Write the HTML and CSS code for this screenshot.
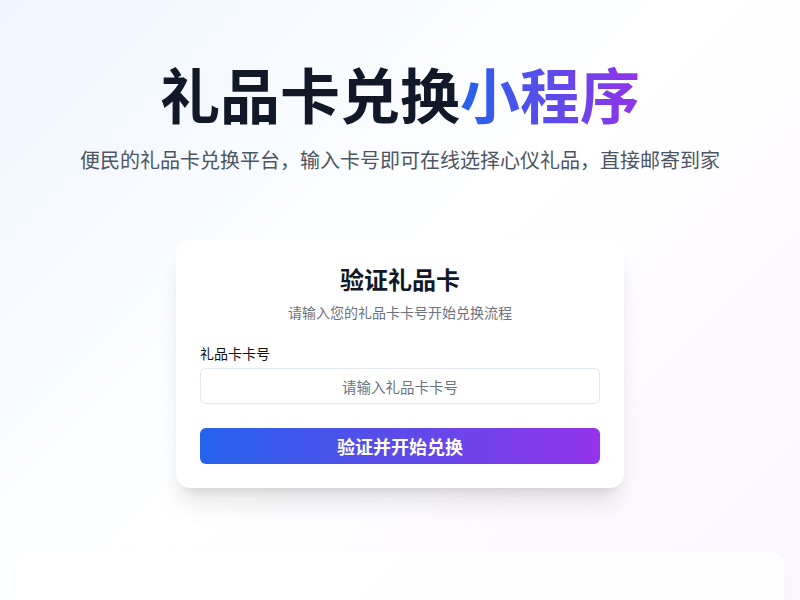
FILE: index.html
```html
<!DOCTYPE html>
<html lang="zh-CN">
<head>
<meta charset="utf-8">
<title>礼品卡兑换小程序</title>
<link rel="stylesheet" href="styles.css">
</head>
<body>
<div class="page">
  <header class="hero">
    <h1 class="hero-title">礼品卡兑换<span class="grad">小程序</span></h1>
    <p class="hero-sub">便民的礼品卡兑换平台，输入卡号即可在线选择心仪礼品，直接邮寄到家</p>
  </header>

  <div class="card">
    <div class="card-header">
      <h2 class="card-title">验证礼品卡</h2>
      <p class="card-desc">请输入您的礼品卡卡号开始兑换流程</p>
    </div>
    <form class="card-content">
      <div class="field">
        <label class="label" for="code">礼品卡卡号</label>
        <input class="input" id="code" type="text" placeholder="请输入礼品卡卡号">
      </div>
      <button class="btn" type="button">验证并开始兑换</button>
    </form>
  </div>

  <section class="panel"></section>
</div>
</body>
</html>
```

FILE: styles.css
```css
* { box-sizing: border-box; }
html, body { margin: 0; padding: 0; }
body {
  font-family: "Inter", "Noto Sans CJK SC", sans-serif;
  background: linear-gradient(135deg, #eff6ff 0%, #ffffff 50%, #faf5ff 100%);
  height: 600px;
  overflow: hidden;
  color: #111827;
}
.page {
  padding: 67px 16px 0;
  display: flex;
  flex-direction: column;
  align-items: center;
}
.hero { text-align: center; }
.hero-title {
  margin: 0;
  font-size: 60px;
  line-height: 60px;
  font-weight: 700;
  color: #111827;
  letter-spacing: 0;
}
.grad {
  background: linear-gradient(90deg, #2563eb, #9333ea);
  -webkit-background-clip: text;
  background-clip: text;
  color: transparent;
}
.hero-sub {
  margin: 20px 0 0;
  font-size: 20px;
  line-height: 28px;
  color: #4b5563;
}
.card {
  margin-top: 65px;
  width: 448px;
  background: #ffffff;
  border-radius: 14px;
  box-shadow: 0 20px 25px -5px rgba(0,0,0,0.1), 0 8px 10px -6px rgba(0,0,0,0.1);
}
.card-header {
  padding: 25px 24px 24px;
  display: flex;
  flex-direction: column;
  gap: 6px;
  text-align: center;
}
.card-title {
  margin: 0;
  font-size: 24px;
  line-height: 32px;
  font-weight: 700;
  color: #111827;
}
.card-desc {
  margin: 0;
  font-size: 14px;
  line-height: 20px;
  color: #6b7280;
}
.card-content {
  margin: 0;
  padding: 0 24px 24px;
  display: flex;
  flex-direction: column;
  gap: 24px;
}
.field {
  display: flex;
  flex-direction: column;
  gap: 7px;
}
.label {
  font-size: 14px;
  line-height: 14px;
  font-weight: 400;
  color: #111111;
}
.input {
  height: 36px;
  width: 100%;
  border: 1px solid #e2e8f0;
  border-radius: 6px;
  background: #ffffff;
  font-family: "Noto Sans CJK SC", sans-serif;
  font-size: 14.5px;
  text-align: center;
  color: #111827;
  outline: none;
}
.input::placeholder { color: #6b7280; }
.btn {
  height: 36px;
  width: 100%;
  border: 0;
  border-radius: 6px;
  background: linear-gradient(90deg, #2563eb, #9333ea);
  color: #ffffff;
  font-family: inherit;
  font-size: 18px;
  font-weight: 700;
  cursor: pointer;
}
.panel {
  margin-top: 64px;
  width: 768px;
  height: 200px;
  background: rgba(255,255,255,0.8);
  border-radius: 12px;
  box-shadow: 0 1px 3px rgba(0,0,0,0.03);
}
```
